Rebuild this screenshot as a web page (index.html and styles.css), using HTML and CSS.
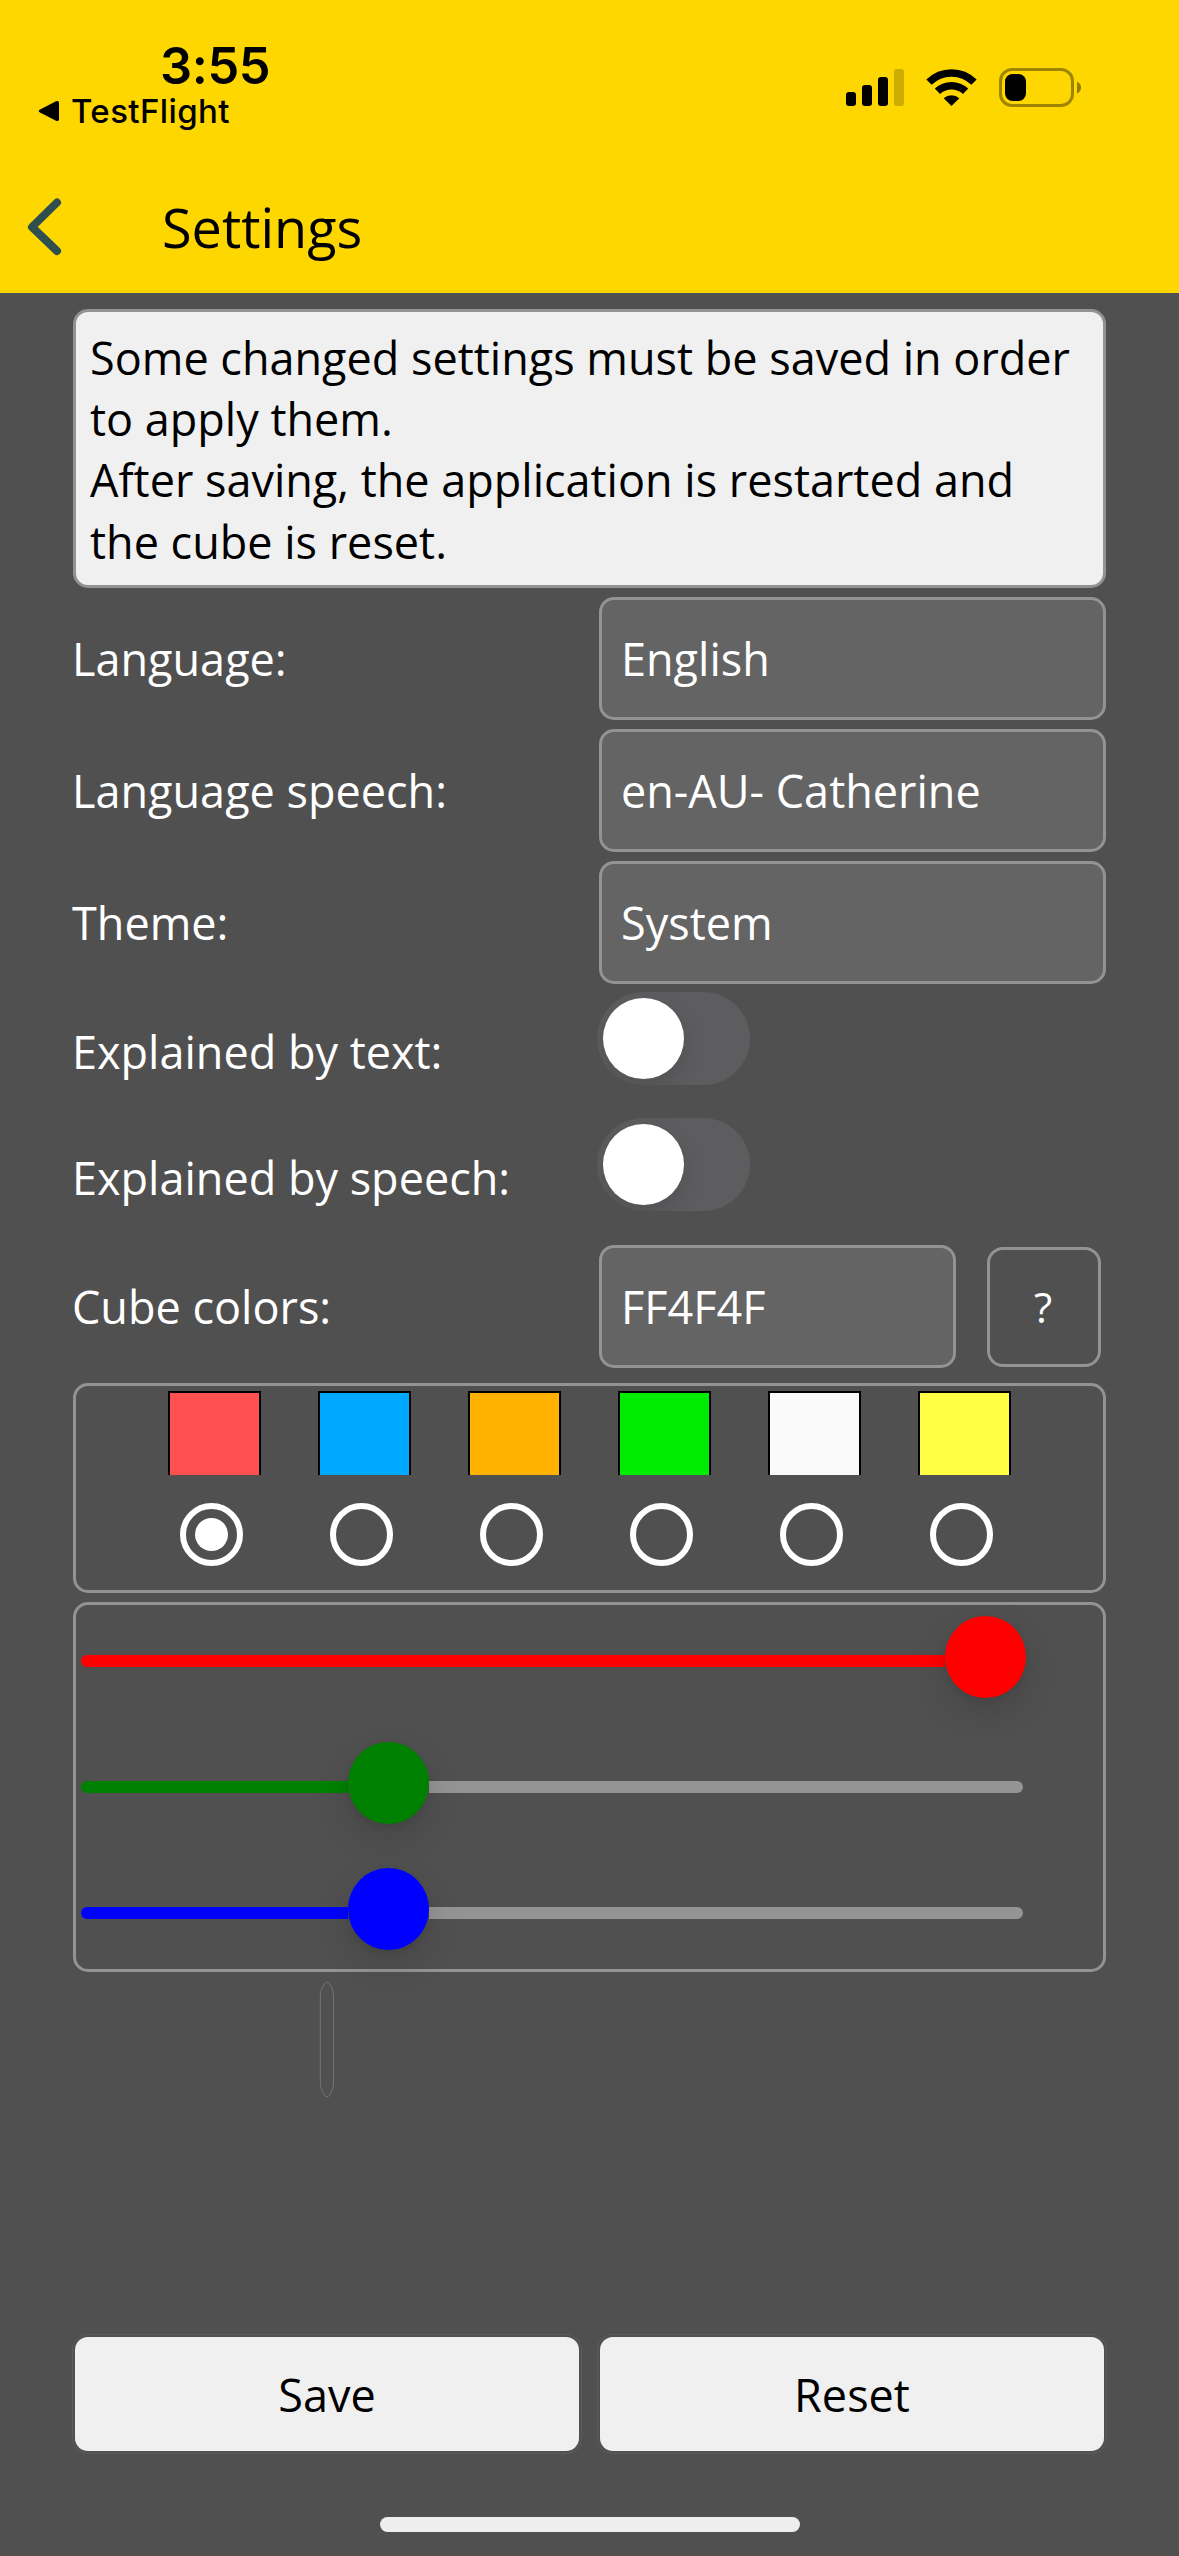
FILE: index.html
```html
<!DOCTYPE html>
<html lang="en">
<head>
<meta charset="utf-8">
<title>Settings</title>
<link rel="stylesheet" href="styles.css">
</head>
<body>
<header class="header">
  <div class="status">
    <div class="status-left">
      <div class="time">3:55</div>
      <div class="return">
        <svg width="22" height="22" viewBox="0 0 22 22"><path d="M2 9.600 18 1.300Q21 0 21 3V19Q21 22 18 20.700L2 12.400Q-.6 11 2 9.600Z"/></svg>
        <span>TestFlight</span>
      </div>
    </div>
    <div class="status-icons">
      <svg width="58" height="38" viewBox="0 0 58 38"><rect x="0" y="23" width="10" height="14" rx="3"/><rect x="16" y="16" width="10" height="21" rx="3"/><rect x="32" y="8" width="10" height="29" rx="3"/><rect x="48" y="0" width="10" height="37" rx="3" opacity=".2"/></svg>
      <svg class="wifi" width="51" height="38" viewBox="0 0 51 38"><g fill="none" stroke="#000" stroke-width="7.500"><path d="M3 13.200a32 32 0 0 1 45 0"/><path d="M11.400 22.300a20.500 20.500 0 0 1 28.200 0"/></g><path d="M25.500 37 17.700 29.300a11.500 11.500 0 0 1 15.600 0Z"/></svg>
      <svg class="battery" width="83" height="39" viewBox="0 0 83 39"><rect x="1.500" y="1.500" width="72" height="36" rx="11.500" fill="none" stroke="#000" stroke-width="3" opacity=".38"/><rect x="6" y="6" width="21" height="27" rx="7.500"/><path d="M78 13.500q4 2 4 6t-4 6Z" opacity=".42"/></svg>
    </div>
  </div>
  <div class="titlebar">
    <svg width="37" height="60" viewBox="0 0 37 60"><path d="M32 5.500 7 30l25 24" fill="none" stroke="#2f4f4f" stroke-width="8" stroke-linecap="round" stroke-linejoin="round"/></svg>
    <h1 class="title">Settings</h1>
  </div>
</header>
<main class="content">
  <p class="info">Some changed settings must be saved in order<br>to apply them.<br>After saving, the application is restarted and<br>the cube is reset.</p>
  <div class="row"><span class="label">Language:</span><div class="field">English</div></div>
  <div class="row"><span class="label">Language speech:</span><div class="field">en-AU- Catherine</div></div>
  <div class="row"><span class="label">Theme:</span><div class="field">System</div></div>
  <div class="row row-toggle"><span class="label">Explained by text:</span><div class="toggle"><span class="knob"></span></div></div>
  <div class="row row-toggle"><span class="label">Explained by speech:</span><div class="toggle"><span class="knob"></span></div></div>
  <div class="row"><span class="label">Cube colors:</span><div class="color-entry"><div class="field hex">FF4F4F</div><div class="help">?</div></div></div>
  <section class="panel palette">
    <div class="choice"><span class="swatch red"></span><span class="radio checked"></span></div>
    <div class="choice"><span class="swatch blue"></span><span class="radio"></span></div>
    <div class="choice"><span class="swatch orange"></span><span class="radio"></span></div>
    <div class="choice"><span class="swatch green"></span><span class="radio"></span></div>
    <div class="choice"><span class="swatch white"></span><span class="radio"></span></div>
    <div class="choice"><span class="swatch yellow"></span><span class="radio"></span></div>
  </section>
  <section class="panel sliders">
    <div class="slider r"><span class="bar"></span><span class="thumb"></span><span class="rest"></span></div>
    <div class="slider g"><span class="bar"></span><span class="thumb"></span><span class="rest"></span></div>
    <div class="slider b"><span class="bar"></span><span class="thumb"></span><span class="rest"></span></div>
  </section>
  <svg class="sliver" width="16" height="117" viewBox="0 0 16 117"><path d="M8 1Q6 1 3.500 6 1.300 10 1.300 16V101Q1.300 107 3.500 111 6 116 8 116T12.500 111Q14.500 107 14.500 101V16Q14.500 10 12.500 6 10 1 8 1Z" fill="none" stroke="#737373"/></svg>
</main>
<footer class="footer">
  <div class="actions"><div class="outline"><div class="button">Save</div></div><div class="outline"><div class="button">Reset</div></div></div>
  <div class="home"></div>
</footer>
</body>
</html>
```
FILE: styles.css
```css
* { box-sizing: border-box; }
body {
  margin: 0;
  width: 1179px;
  height: 2556px;
  background: #505050;
  color: #fff;
  font: 45px/61px "Open Sans", sans-serif;
  display: flex;
  flex-direction: column;
  overflow: hidden;
}
svg { display: block; flex: none; }

.header { height: 293px; background: #ffd700; color: #000; flex: none; }
.status { height: 165px; display: flex; justify-content: space-between; padding: 37px 97px 0 38px; }
.status-left { font-family: Inter, sans-serif; }
.time { font-size: 50.500px; font-weight: 600; line-height: 58px; padding-left: 122px; letter-spacing: -0.400px; }
.return { display: flex; align-items: center; gap: 11px; font-size: 33px; font-weight: 500; line-height: 32px; letter-spacing: 0.400px; }
.status-icons { display: flex; align-items: flex-start; padding-top: 32px; }
.wifi { margin-left: 22px; }
.battery { margin: -1px 0 0 22px; }
.titlebar { display: flex; padding-left: 25px; }
.titlebar svg { margin-top: 32px; }
.title { margin: 25px 0 0 100px; font-size: 54px; font-weight: 400; line-height: 74px; }

.content { padding: 16px 73px 0; height: 2041px; display: flex; flex-direction: column; gap: 9px; flex: none; }
.content > * { flex: none; }
.info { margin: 0; height: 279px; padding: 15px 14px; border: 3px solid #929292; border-radius: 15px; background: #f0f0f0; color: #000; white-space: nowrap; line-height: 61.200px; }
.row { display: grid; grid-template-columns: 526px 1fr; align-items: center; height: 123px; }
.label { margin-left: -1px; }
.field { height: 123px; padding: 28px 19px; border: 3px solid #939393; border-radius: 15px; background: #646464; }
.row-toggle { height: 117px; }
.toggle { align-self: start; width: 153px; height: 93px; margin: -1px 0 0 -2px; padding: 6px; border-radius: 47px; background: #5d5d60; overflow: hidden; }
.knob { display: block; width: 81px; height: 81px; border-radius: 50%; background: #fff; box-shadow: 0 9px 24px rgba(0, 0, 0, .13); }
.color-entry { display: flex; align-items: center; gap: 31px; }
.hex { width: 357px; }
.help { width: 114px; height: 120px; padding: 27px 2px 27px 0; border: 3px solid #939393; border-radius: 16px; text-align: center; font-size: 42px; line-height: 60px; }

.panel { border: 3px solid #939393; border-radius: 15px; }
.palette { margin-top: 6px; height: 210px; display: flex; gap: 57px; padding: 5px 0 0 92px; }
.choice { width: 93px; }
.swatch { display: block; height: 84px; border: 2px solid #000; border-bottom: 0; }
.red { background: #ff4f4f; }
.blue { background: #00a8ff; }
.orange { background: #ffb200; }
.green { background: #00ec00; }
.white { background: #fafafa; }
.yellow { background: #ffff43; }
.radio { display: flex; align-items: center; justify-content: center; width: 63px; height: 63px; margin: 28px 0 0 12px; border: 6px solid #fff; border-radius: 50%; }
.checked::after { content: ""; width: 33px; height: 33px; border-radius: 50%; background: #fff; }

.sliders { height: 370px; padding: 11px 0 0 5px; display: flex; flex-direction: column; gap: 44px; }
.slider { width: 946px; height: 82px; display: flex; }
.bar, .rest { height: 12px; margin-top: 39px; }
.bar { width: 267px; border-radius: 6px 0 0 6px; }
.rest { flex: 1; margin-right: 4px; background: #949494; border-radius: 0 6px 6px 0; }
.thumb { width: 81px; height: 82px; border-radius: 50%; box-shadow: 0 14px 36px rgba(0, 0, 0, .14), 0 3px 6px rgba(0, 0, 0, .07); z-index: 1; }
.r .bar { width: 864px; }
.r .rest { display: none; }
.r .bar, .r .thumb { background: #f00; }
.g .bar, .g .thumb { background: #008000; }
.b .bar, .b .thumb { background: #00f; }
.sliver { margin-left: 246px; }

.footer { height: 222px; flex: none; }
.actions { display: grid; grid-template-columns: 1fr 1fr; gap: 17px; padding: 0 73px; }
.outline { height: 120px; padding: 3px 2px; border-radius: 17px; }
.button { height: 114px; padding: 27px 0 26px; border-radius: 13px; background: #f0f0f0; color: #000; text-align: center; box-shadow: 0 0 0 2px #505050, 0 0 0 3px #5b5b5b; }
.home { width: 420px; height: 15px; margin: 63px auto 0; border-radius: 8px; background: #eee; }
```
